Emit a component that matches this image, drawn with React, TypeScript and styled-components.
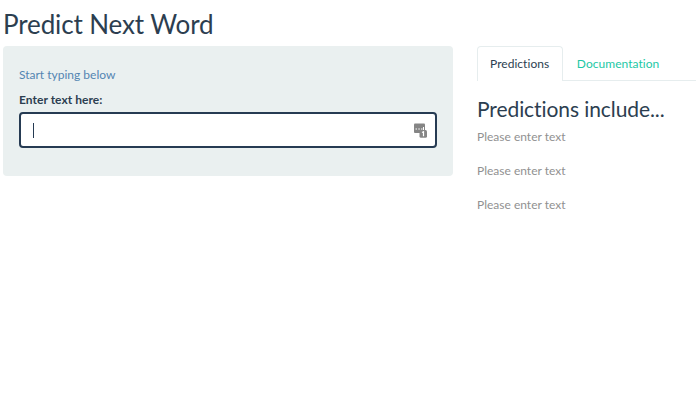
import React from "react";
import styled, { createGlobalStyle } from "styled-components";

const GlobalStyle = createGlobalStyle`
  * { box-sizing: border-box; }
  body {
    margin: 0;
    background: #fff;
    color: #2c3e50;
    font-family: Lato, "Liberation Sans", sans-serif;
    font-variant-ligatures: none;
    overflow: hidden;
  }
`;
const Page = styled.main`
  width: 696px;
  height: 400px;
  padding: 10px 0 0 3px;
`;
const Title = styled.h2`
  margin: 0;
  height: 36px;
  font-size: 26px;
  font-weight: 400;
  line-height: 29px;
  letter-spacing: -0.12px;
`;
const Layout = styled.div`
  display: grid;
  grid-template-columns: 450px 1fr;
  column-gap: 24px;
  align-items: start;
`;
const Well = styled.form`
  height: 130px;
  padding: 20px 16px 0;
  background: #eaf0f0;
  border-radius: 4px;
`;
const Hint = styled.p`
  margin: 0;
  font-size: 12px;
  line-height: 17px;
  color: #5485b2;
`;
const Label = styled.label`
  display: block;
  margin: 8px 0 4px;
  font-size: 12px;
  font-weight: 700;
  line-height: 17px;
  letter-spacing: 0.04px;
`;
const InputBox = styled.div`
  display: flex;
  align-items: center;
  justify-content: space-between;
  height: 36px;
  padding: 0 8px 0 12px;
  background: #fff;
  border: 2px solid #263b53;
  border-radius: 4px;
`;
const Caret = styled.span`
  width: 1px;
  height: 15px;
  background: #263b53;
`;
const Tabs = styled.nav`
  display: flex;
  height: 35px;
  border-bottom: 1px solid #e6edee;
`;
const Tab = styled.span<{ $active?: boolean }>`
  height: 35px;
  padding: 0 12.6px 0 12px;
  font-size: 12px;
  line-height: 34px;
  letter-spacing: 0.04px;
  color: ${p => (p.$active ? "#2c3e50" : "#1cc8a5")};
  background: ${p => (p.$active ? "#fff" : "transparent")};
  border: 1px solid ${p => (p.$active ? "#e6edee" : "transparent")};
  border-bottom: 0;
  border-radius: 4px 4px 0 0;
  margin-right: 1px;
`;
const Heading = styled.h3`
  margin: 15px 0 7px;
  font-size: 21px;
  font-weight: 400;
  line-height: 25px;
  letter-spacing: -0.08px;
`;
const Prediction = styled.p`
  margin: 0 0 17px;
  font-size: 12px;
  line-height: 17px;
  color: #919191;
`;

export default function App() {
  return (
    <Page>
      <GlobalStyle />
      <Title>Predict Next Word</Title>
      <Layout>
        <Well>
          <Hint>Start typing below</Hint>
          <Label>Enter text here:</Label>
          <InputBox>
            <Caret />
            <svg width="13" height="15" viewBox="0 0 13 15">
              <rect x="0" y="0.5" width="11" height="9.5" rx="1" fill="#858585" />
              <path d="M1.5 6h1.5M4.3 6h1.5M7 6h1.5M9.5 4v3" stroke="#fff" strokeWidth="1" />
              <rect x="5.5" y="7" width="7.5" height="7.7" rx="1.5" fill="#858585" />
              <path d="M8 9.5 9.5 8.7v4.6" fill="none" stroke="#fff" strokeWidth="1.2" />
            </svg>
          </InputBox>
        </Well>
        <section>
          <Tabs>
            <Tab $active>Predictions</Tab>
            <Tab>Documentation</Tab>
          </Tabs>
          <Heading>Predictions include...</Heading>
          <Prediction>Please enter text</Prediction>
          <Prediction>Please enter text</Prediction>
          <Prediction>Please enter text</Prediction>
        </section>
      </Layout>
    </Page>
  );
}
